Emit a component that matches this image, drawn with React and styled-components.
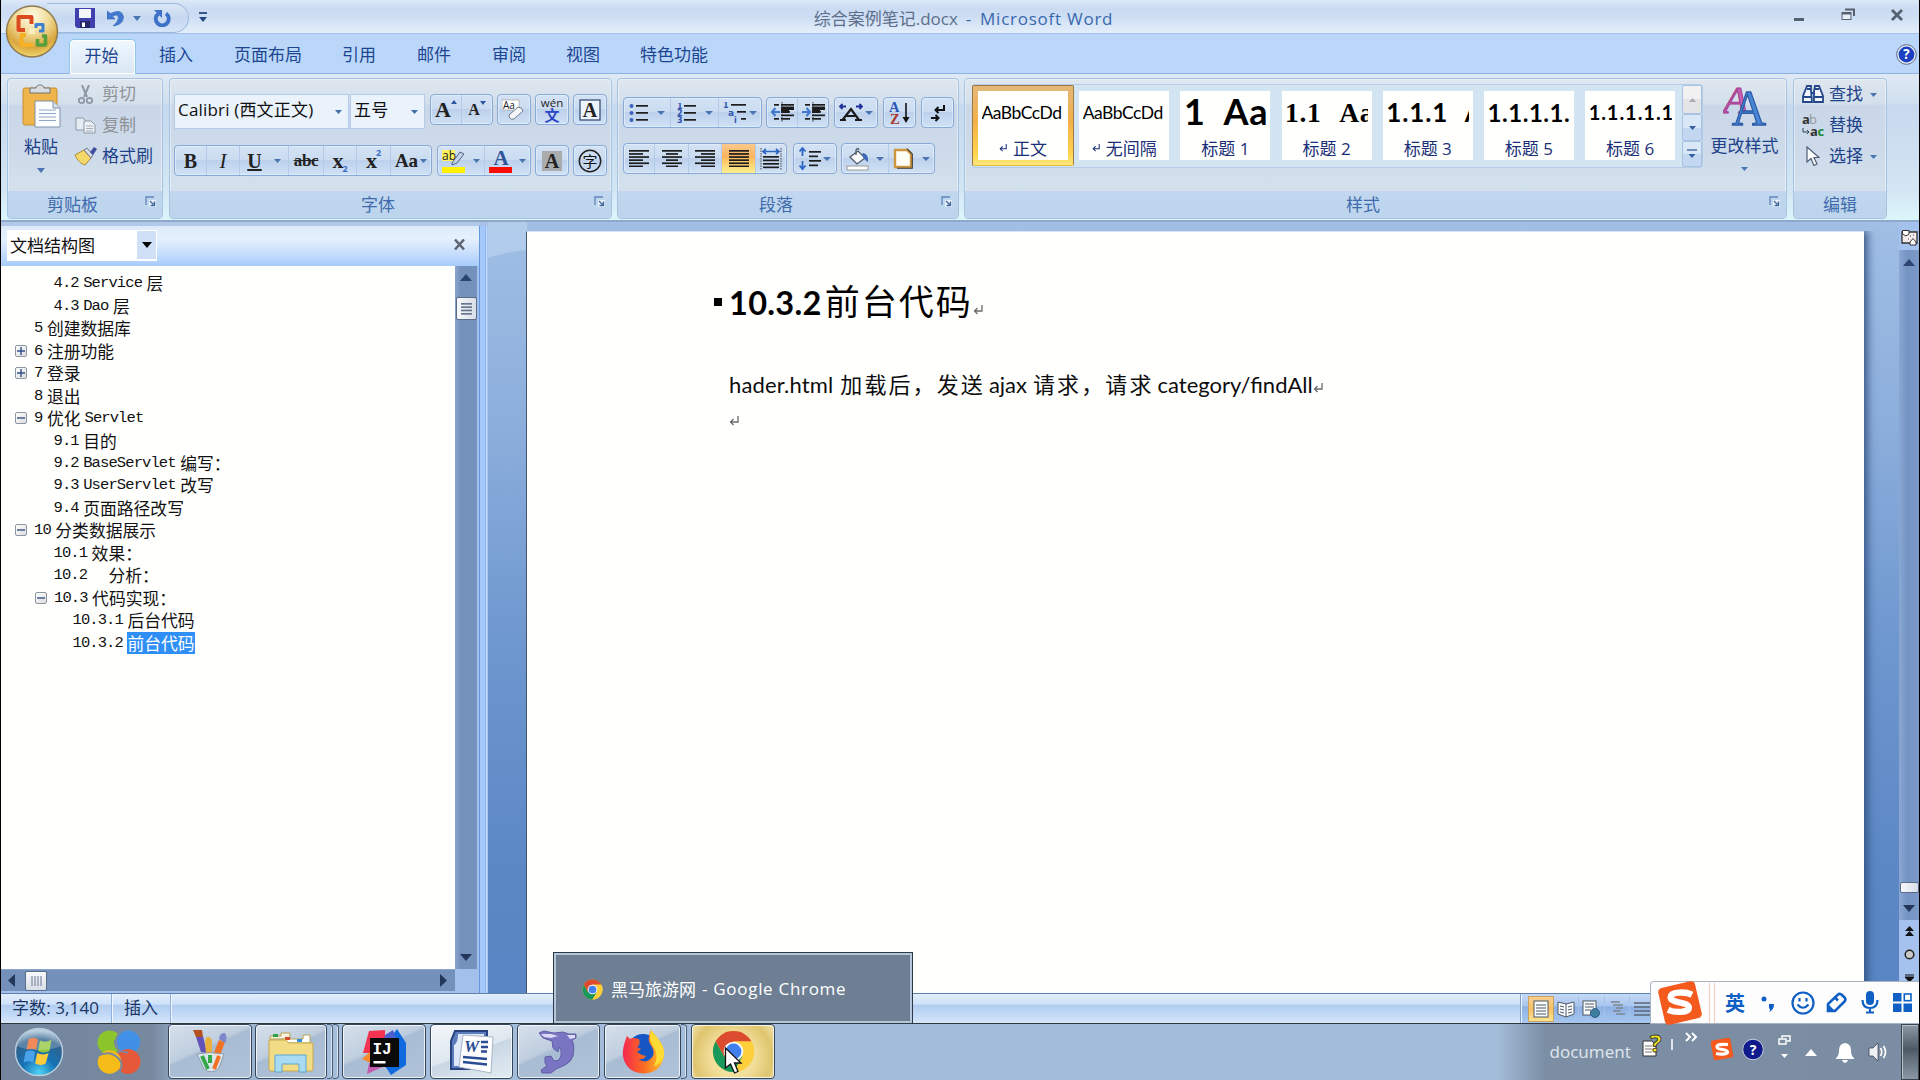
import React from 'react';
import styled, { createGlobalStyle, css } from 'styled-components';

const UI = '"Open Sans","Noto Sans CJK SC",sans-serif';
const CAL = 'Lato,"Noto Sans CJK SC",sans-serif';
const NAVY = '#1e4289';

const Global = createGlobalStyle`
  *{box-sizing:border-box;}
  body{margin:0;background:#000;overflow:hidden;}
`;

const Screen = styled.div`
  position:relative;width:1920px;height:1080px;overflow:hidden;background:#000;
  padding:0 1px;display:flex;flex-direction:column;font-family:${UI};font-size:17px;color:${NAVY};
  white-space:nowrap;cursor:default;
`;

/* title bar */
const TitleBar = styled.div`
  flex:none;height:34px;display:flex;align-items:flex-start;justify-content:space-between;
  background:linear-gradient(#dbe8f7 0,#cbdcf2 25%,#cddef4 50%,#dfebf9 90%,#e4effb 100%);
  border-bottom:1px solid #a5c3ea;
`;
const Quick = styled.div`
  width:340px;height:33px;padding:3px 0 0 46px;display:flex;align-items:flex-start;
`;
const QuickPill = styled.div`
  width:142px;height:30px;border:1px solid #9db9de;border-left:0;border-radius:0 16px 16px 0;
  background:linear-gradient(#dbe7f5,#c5d8f0 50%,#d6e5f7);display:flex;align-items:center;padding-left:28px;
`;
const Gap = styled.div`flex:none;width:${p => p.w || 0}px;height:${p => p.h || 0}px;`;
const Title = styled.div`
  width:310px;display:flex;justify-content:center;line-height:37px;font-size:17px;color:#3a68ad;gap:8px;margin-left:7px;
  b{font-weight:400;color:#5d6f8b;}
  span{letter-spacing:.75px;}
`;
const WinButtons = styled.div`width:340px;height:33px;display:flex;justify-content:flex-end;padding:8px 15px 0 0;`;

const OfficeButton = styled.div`
  position:absolute;left:5px;top:4px;width:54px;height:54px;
`;

/* tabs */
const TabStrip = styled.div`
  flex:none;height:40px;background:#bad7fa;border-bottom:1px solid #8fb3e0;display:flex;align-items:flex-end;padding-left:68px;
`;
const Tab = styled.div`
  height:34px;line-height:32px;width:${p => p.w}px;text-align:center;margin-right:${p => p.gap || 0}px;font-size:17px;color:#1d4690;
  ${p => p.$active && css`
    height:35px;margin-bottom:-1px;line-height:32px;padding-right:2px;border:1px solid #8ec7ea;border-bottom:0;border-radius:5px 5px 0 0;
    background:linear-gradient(#f2f8fe,#e3eefa 50%,#dbe7f3);box-shadow:inset 0 0 0 1px #fff;
  `}
`;
const HelpSlot = styled.div`flex:1;display:flex;justify-content:flex-end;padding:0 2px 8px 0;`;

/* ribbon */
const Ribbon = styled.div`
  flex:none;height:148px;padding:4px 0 0 6px;display:flex;align-items:flex-start;
  background:linear-gradient(#dfe9f4 0,#d0dfef 20%,#c6d9ee 21%,#d3e6f4 80%,#dcf6fb 100%);
  border-bottom:2px solid #8ea9cc;
`;
const Group = styled.div`
  flex:none;width:${p => p.w}px;height:141px;margin-right:${p => p.gap}px;border:1px solid #a6c3e2;border-radius:4px;
  box-shadow:inset 0 0 0 1px rgba(255,255,255,.4);
  background:linear-gradient(#dfe7ef 0,#d3dfeb 18%,#c9d7e8 19%,#ccdaea 50%,#d9e5ef 100%);
  display:flex;flex-direction:column;
`;
const GroupBody = styled.div`height:112px;display:flex;flex-direction:${p => (p.$col ? 'column' : 'row')};padding:${p => p.pad || 0};`;
const GroupLabel = styled.div`
  height:27px;background:linear-gradient(#c0d7ef,#bdd5ec);border-radius:0 0 3px 3px;display:flex;line-height:28px;
  color:#3f6bac;padding:0 6px 0 ${p => p.pl}px;justify-content:space-between;
  svg{margin-top:5px;}
`;
const Row = styled.div`display:flex;align-items:${p => p.align || 'flex-start'};gap:${p => p.gap || 0}px;height:${p => (p.h ? p.h + 'px' : 'auto')};`;
const Col = styled.div`display:flex;flex-direction:column;align-items:${p => p.align || 'flex-start'};width:${p => (p.w ? p.w + 'px' : 'auto')};padding:${p => p.pad || 0};`;
const Cmd = styled.div`
  display:flex;align-items:center;height:31px;color:${p => (p.off ? '#8f9296' : NAVY)};
  i{font-style:normal;width:${p => p.iw || 27}px;display:flex;justify-content:center;margin-right:${p => p.ig || 0}px;}
  span{line-height:24px;margin-top:-1px;}
`;
const BigLabel = styled.div`line-height:25px;height:24px;color:${NAVY};`;

const Combo = styled.div`
  flex:none;width:${p => p.w}px;height:35px;border:1px solid #b3cbe8;background:#eaf2fb;color:#101010;
  display:flex;align-items:center;justify-content:space-between;padding:0 6px 0 3px;font-size:17px;letter-spacing:.18px;
  span{line-height:26px;margin-top:-3px;}
`;
const Btns = styled.div`
  flex:none;display:flex;height:31px;border:1px solid #88aad6;border-radius:4px;margin-right:${p => p.mr || 0}px;
  background:linear-gradient(#d3e2f3 0,#cbdcf1 48%,#bdd1ec 50%,#cfe1f5 100%);box-shadow:inset 0 0 0 1px rgba(235,244,255,.6);
`;
const Cell = styled.div`
  flex:none;width:${p => p.w}px;height:29px;display:flex;align-items:center;justify-content:center;gap:${p => p.g || 0}px;
  border-right:${p => (p.last ? 0 : '1px solid #b3cbe8')};
  ${p => p.$on && css`background:linear-gradient(#fbc98c 0,#fbb35c 45%,#fdc261 52%,#fff08f 100%);`}
`;
const Glyph = styled.span`
  font-family:"Liberation Serif",serif;font-weight:${p => p.fw || 700};font-size:${p => p.s || 20}px;line-height:26px;color:${p => p.c || '#222'};
  font-style:${p => (p.it ? 'italic' : 'normal')};text-decoration:${p => p.td || 'none'};letter-spacing:${p => p.ls || 0}px;
`;
const Mini = styled.span`font-size:9px;font-weight:700;line-height:13px;color:#3b6fc9;align-self:${p => p.at};margin-left:-1px;`;

/* styles gallery */
const Gallery = styled.div`
  flex:none;width:731px;height:84px;border:1px solid #b5cce6;background:#d3e4f3;display:flex;border-radius:3px;
`;
const StyleCell = styled.div`
  flex:none;width:101.2px;height:82px;padding:${p => (p.$on ? '0' : '6px 5px 0')};
`;
const Pick = styled.div`
  width:102px;height:81px;margin-left:-1px;padding:5px;border:1px solid #9b7a45;border-bottom-color:#e5b93a;
  background:linear-gradient(#e5b878,#f3b04a 45%,#ffd24d 85%,#ffe77a);
  border-radius:2px;
`;
const Card = styled.div`
  width:90px;height:69px;background:#fffffd;overflow:hidden;display:flex;flex-direction:column;align-items:center;
`;
const Preview = styled.div`
  width:83px;height:45px;overflow:hidden;color:#000;font-family:${p => p.ff || CAL};font-weight:${p => p.fw || 400};
  font-size:${p => p.s}px;letter-spacing:${p => p.ls || 0}px;word-spacing:${p => p.ws || 0}px;line-height:${p => p.lh || 43}px;white-space:pre;
`;
const CardLabel = styled.div`line-height:23px;height:24px;color:#1a2f78;display:flex;align-items:center;gap:6px;font-size:17px;`;
const GalScroll = styled.div`width:20px;height:82px;margin-left:auto;display:flex;flex-direction:column;`;
const GalBtn = styled.div`
  height:${p => p.h}px;border:1px solid #a9c3e3;display:flex;align-items:center;justify-content:center;border-radius:2px;
  background:${p => (p.off ? 'linear-gradient(#f1f1f1 50%,#e2e4e6 50%)' : 'linear-gradient(#d9e7f7 50%,#c3d7f0 50%)')};
`;

/* work area */
const Work = styled.div`flex:none;height:771px;display:flex;background:#a9c3e8;`;
const Pane = styled.div`flex:none;width:478px;height:771px;padding-top:4px;background:linear-gradient(#b2c8e8 4px,#a3c0ec 4px);display:flex;flex-direction:column;`;
const PaneHead = styled.div`
  height:40px;background:linear-gradient(#dce9fa 0,#e6f1fe 30%,#d3e5fd 55%,#a8ccfb 100%);display:flex;align-items:flex-start;justify-content:space-between;padding:4px 13px 0 6px;
`;
const PaneCombo = styled.div`
  width:150px;height:31px;background:#fff;color:#111;display:flex;justify-content:space-between;padding:1px 1px 1px 3px;line-height:29px;
`;
const PaneClose = styled.div`padding-top:8px;`;
const ComboArrow = styled.div`width:19px;height:28px;background:#cfe0f7;display:flex;align-items:center;justify-content:center;`;
const TreeArea = styled.div`height:703px;display:flex;`;
const Tree = styled.div`width:454px;background:#fffffe;padding-top:6px;`;
const Node = styled.div`
  height:22.47px;display:flex;align-items:center;padding-left:${p => p.x}px;color:#111;
`;
const Toggle = styled.div`
  width:12px;height:12px;border:1px solid #8c97a3;border-radius:2px;background:linear-gradient(135deg,#fff,#dcdcdc);margin-right:7px;
  display:flex;align-items:center;justify-content:center;
`;
const Lat = styled.span`font-family:"Liberation Mono",monospace;font-size:15.5px;letter-spacing:-0.9px;margin-right:4.5px;line-height:22px;`;
const Han = styled.span`
  font-family:"Noto Sans CJK SC",sans-serif;font-size:16.8px;line-height:22px;margin-right:4px;
  ${p => p.$sel && css`background:#2f8ff5;color:#fff;`}
`;
const VScroll = styled.div`
  width:${p => p.w}px;height:100%;background:linear-gradient(90deg,#8aa5cd 0,#7391bb 25%,#7592bd 100%);display:flex;flex-direction:column;align-items:center;padding:${p => p.pad || 0};
`;
const Thumb = styled.div`
  width:${p => p.w}px;height:${p => p.h}px;border:1px solid #5c6c84;border-radius:2px;background:linear-gradient(${p => p.dir || '90deg'},#f7f9fc,#d8dee8);
  display:flex;align-items:center;justify-content:center;
`;
const HScroll = styled.div`
  width:454px;height:22px;background:#7391bb;border-top:1px solid #8aa5cd;display:flex;align-items:center;padding:0 7px;
`;
const Spacer = styled.div`flex:1;`;
const Splitter = styled.div`flex:none;width:9px;margin-top:4px;background:linear-gradient(90deg,#6497de 0 1px,#a5c9fa 1px 6px,#8db6f0 6px 7px,#c9defb 7px 8px,#a6c5ee 8px);`;
const Canvas = styled.div`
  flex:1;display:flex;height:771px;padding:9px 0 0 38px;position:relative;
  background:linear-gradient(#a1bfe5 0,#8dafdc 25%,#6e97cf 55%,#5b87c4 85%,#5a86c5 100%);
`;
const Wedge = styled.svg`position:absolute;left:0;top:0;`;
const Paper = styled.div`
  position:relative;width:1338px;height:762px;background:#fffffd;border-left:1px solid #44546e;border-top:1px solid #d7e4f5;
  box-shadow:2px 0 9px 1px #2f4d7c;clip-path:inset(0 -16px 0 0);padding:38px 0 0 187px;
`;
const Heading = styled.div`display:flex;align-items:baseline;height:93px;color:#000;font-family:${CAL};line-height:60px;`;
const HeadNum = styled.span`font-weight:700;font-size:32.5px;letter-spacing:0.3px;margin-right:3px;`;
const HeadHan = styled.span`font-family:"Noto Sans CJK SC",sans-serif;font-size:35px;letter-spacing:2px;`;
const Bullet = styled.span`width:8px;height:8px;background:#000;margin-right:7px;align-self:flex-start;margin-top:28px;`;
const Para = styled.div`display:flex;align-items:baseline;height:40px;line-height:40px;padding-left:15px;color:#0d0d0d;`;
const PLat = styled.span`font-family:${CAL};font-size:22px;letter-spacing:${p => p.ls || 0}px;margin-right:${p => p.mr}px;`;
const PHan = styled.span`font-family:"Noto Sans CJK SC",sans-serif;font-size:22px;letter-spacing:2.1px;margin-right:${p => p.mr}px;`;
const RightRail = styled.div`flex:none;width:20px;height:771px;display:flex;flex-direction:column;align-items:center;background:#a5c1ee;padding-top:7px;`;
const RailScroll = styled.div`width:20px;height:670px;margin-top:4px;background:linear-gradient(90deg,#8ba8d4,#7594c2 40%,#7b99c8);display:flex;flex-direction:column;align-items:center;padding:9px 0 8px;`;

/* status bar */
const Status = styled.div`
  flex:none;height:30px;display:flex;align-items:stretch;color:#1a3565;border-top:1px solid #5f7fae;
  background:linear-gradient(#e2eefc 0,#cfe1f8 35%,#b1cdf1 38%,#c4dbf7 75%,#d8e8fb 100%);
`;
const StatusItem = styled.div`
  width:${p => p.w}px;line-height:28px;padding-left:${p => p.pl}px;border-right:1px solid #8fb0dc;box-shadow:1px 0 0 #eff6ff;letter-spacing:${p => p.ls || 0}px;
`;
const Views = styled.div`margin-left:auto;width:399px;padding:2px 0 0 7px;display:flex;border-left:1px solid #7d9fd0;box-shadow:inset 1px 0 #eef5ff;background:linear-gradient(#c5daf5 0,#a9c6ee 40%,#8db1e3 45%,#a8c7f0 100%);`;
const ViewBtn = styled.div`
  width:25.5px;height:26px;display:flex;align-items:center;justify-content:center;border-right:1px solid #a5c2ea;
  ${p => p.$on && css`background:linear-gradient(#f6cf92,#f7bf62 50%,#ffe591);border:1px solid #c8a25e;`}
`;

/* task bar */
const Taskbar = styled.div`
  flex:none;height:57px;border-top:1px solid #30363e;display:flex;padding-left:13px;
  background:linear-gradient(90deg,#74869d 0,#77899f 150px,#8fa5c0 175px,#a4bdda 300px,#a4bdda 1495px,#7b8ea4 1545px,#7a8da3 100%);
`;
const Slot = styled.div`width:${p => p.w}px;height:56px;display:flex;align-items:center;justify-content:center;margin-right:${p => p.mr || 0}px;`;
const Task = styled.div`
  flex:none;width:${p => p.w}px;height:55px;margin-right:${p => p.mr || 0}px;border:1px solid #35455a;border-radius:4px;
  box-shadow:inset 0 0 0 1px rgba(255,255,255,.75);display:flex;align-items:center;justify-content:center;
  background:${p => p.bg || 'linear-gradient(155deg,#d6e0ec 0,#bfcede 42%,#a8bcd3 46%,#b0c3d9 100%)'};
`;
const StackEdge = styled.div`
  width:${p => p.w}px;height:55px;margin-right:${p => p.mr || 0}px;border:1px solid #4b5d75;border-left:0;border-radius:0 4px 4px 0;box-shadow:inset -1px 0 0 #dbe6f1;
`;
const Tray = styled.div`margin-left:auto;display:flex;align-items:center;height:56px;`;
const TrayText = styled.span`color:#dde3ea;font-size:17px;line-height:24px;margin-top:-1px;font-family:"Noto Sans",sans-serif;`;
const ShowDesk = styled.div`width:18px;height:56px;border:1px solid #39444f;box-shadow:inset 1px 1px 0 #b5c1cc;background:linear-gradient(#8d9aa6 0,#4d5a66 45%,#5f6d79 60%,#8a98a5 100%);`;

const HoverCard = styled.div`
  position:absolute;left:553px;top:952px;width:360px;height:72px;background:#6e7f93;border:1px solid #2c3947;
  box-shadow:inset 0 0 0 2px #b4c6d8;display:flex;align-items:center;padding:0 0 0 28px;color:#fff;
  svg{margin:2px 8px 0 0;}
  span{letter-spacing:.7px;margin-left:6px;}
`;
const Ime = styled.div`
  position:absolute;left:1650px;top:981px;width:269px;height:43px;background:#fdfdfd;border:1px solid #a9b4c2;border-right:0;border-radius:4px 0 0 0;
  display:flex;align-items:center;padding-left:7px;color:#0f5fc4;
`;
const ImeBar = styled.div`width:6px;height:40px;border:1px solid #f3cdbd;border-width:0 1px;margin:0 10px 0 7px;`;
const ImeZh = styled.b`font-size:20px;font-family:"Noto Sans CJK SC",sans-serif;line-height:40px;width:20px;`;
const Pointer = styled.svg`position:absolute;left:724px;top:1046px;`;

/* icons */
const Svg = ({ w, h, vb, children, ...r }) => (
  <svg width={w} height={h} viewBox={vb || `0 0 ${w} ${h}`} display="block" {...r}>{children}</svg>
);
const Down = ({ c = '#4a75b0', w = 7, h = 4 }) => <Svg w={w} h={h} vb="0 0 8 5" preserveAspectRatio="none"><path d="M0 0H8L4 5Z" fill={c} /></Svg>;
const Up = ({ c = '#2b4470', w = 12, h = 7 }) => <Svg w={w} h={h} vb="0 0 8 5" preserveAspectRatio="none"><path d="M0 5H8L4 0Z" fill={c} /></Svg>;
const Launcher = () => (
  <Svg w={11} h={11}><path d="M1 9V1H9" fill="none" stroke="#5f86bb" strokeWidth="1.3" /><path d="M4 4H11V11H4Z" fill="#e9f2fc" /><path d="M5 5L9 9M9.5 5.5V9.5H5.5" stroke="#47699b" strokeWidth="1.4" fill="none" /></Svg>
);
const Ret = ({ s = 10, c = '#6b6b6b' }) => (
  <Svg w={s} h={s} vb="0 0 10 10"><path d="M9 0V6H2M4.5 3L1.5 6L4.5 9" fill="none" stroke={c} strokeWidth="1.3" /></Svg>
);
const lines = (arr, c = '#1c1c1c') => arr.map(([x, y, w], i) => <rect key={i} x={x} y={y} width={w} height="1.7" fill={c} />);
const Chrome = ({ s }) => (
  <Svg w={s} h={s} vb="0 0 48 48">
    <circle cx="24" cy="24" r="23" fill="#fdd03b" />
    <path d="M4.1 12.5A23 23 0 0 0 24 47L34 30L24 24L14 30Z" fill="#18985a" />
    <path d="M24 47A23 23 0 0 0 43.900 12.500H24L34 30Z" fill="#fdd03b" />
    <path d="M4.100 12.500A23 23 0 0 1 43.900 12.500H24L14 30Z" fill="#dc4b2f" />
    <circle cx="24" cy="24" r="11" fill="#f5f5f5" /><circle cx="24" cy="24" r="8.8" fill="#3f80ee" />
  </Svg>
);
const Sogou = ({ s }) => (
  <Svg w={s} h={s} vb="0 0 42 42">
    <rect x="3" y="3" width="36" height="36" rx="4" fill="#f4591d" transform="rotate(-13 21 21)" />
    <path d="M32.500 13C26 10 12 10 12 15.500C12 21.500 29.500 19.500 29.500 25.500C29.500 30.500 16 30.500 9.500 27.500" fill="none" stroke="#fff" strokeWidth="6" />
  </Svg>
);
const Question = ({ s }) => (
  <Svg w={s} h={s} vb="0 0 22 22"><circle cx="11" cy="11" r="10.300" fill="#e6edf7" stroke="#53637e" /><circle cx="11" cy="11" r="8.300" fill="#1b3fc0" />
    <text x="11" y="16" fontSize="14" fontWeight="700" textAnchor="middle" fill="#fff" fontFamily="Open Sans">?</text></Svg>
);
const Orb = () => (
  <Svg w={54} h={54}>
    <defs><radialGradient id="orb" cx=".5" cy=".2" r=".85"><stop offset="0" stopColor="#fffbe6" /><stop offset=".4" stopColor="#f1da98" /><stop offset=".72" stopColor="#d9a63c" /><stop offset="1" stopColor="#f8e27d" /></radialGradient></defs>
    <circle cx="27" cy="27.500" r="25.500" fill="url(#orb)" stroke="#8f7b4e" strokeWidth="1.500" />
    <g fill="none" strokeWidth="4" strokeLinejoin="round">
      <path d="M20 26H13.500V13H26.500V20" stroke="#dc4a1f" /><path d="M31 24V20.500H38V27H34" stroke="#3c80cf" strokeWidth="3" />
      <path d="M28 41H16.500V31H21" stroke="#f6b024" /><path d="M32.500 35V41H40.500V32H37" stroke="#55a03c" strokeWidth="3.600" />
    </g>
    <path d="M24 25H30V30H24Z" fill="#fbefc0" />
  </Svg>
);
const listIcon = kind => (
  <Svg w={20} h={20}>
    {kind === 'ul' && [3, 10, 17].map(y => <circle key={y} cx="2.500" cy={y} r="2" fill="#3b62b8" />)}
    {kind === 'ol' && [1, 2, 3].map(n => <text key={n} x="0" y={7 * n - 1} fontSize="8" fontWeight="700" fill="#2f55b0" fontFamily="DejaVu Sans">{n}</text>)}
    {lines([[7, 2, 12], [7, 9, 12], [7, 16, 12]])}
  </Svg>
);
const align = rows => <Svg w={20} h={17}>{lines(rows.map(([x, w], i) => [x, i * 3.1, w]))}</Svg>;
const indent = left => (
  <Svg w={23} h={21}>{lines([[3, 2, 5], [10, 2, 13], [10, 5.500, 13], [10, 9, 9], [10, 12.500, 13], [3, 16, 5], [10, 16, 9]])}
    <path d="M10 4.500H23V8H10ZM10 8H18V11H10Z" fill="#1c1c1c" />
    <path d="M11 0V21" stroke="#333" strokeDasharray="1.500 1.500" />
    <path d={left ? 'M9 10H1M4.500 6L1 10L4.500 14' : 'M0 10H8M4.500 6L8 10L4.500 14'} stroke="#3f78cc" strokeWidth="2" fill="none" /></Svg>
);
const doc = (extra, w = 18, h = 18) => <Svg w={w} h={h} vb="0 0 18 18">{extra}</Svg>;

const segments = t => t.match(/[\x00-\xff]+|[^\x00-\xff]+/g).map((s, i) => (s.charCodeAt(0) < 256 ? <Lat key={i}>{s}</Lat> : <Han key={i}>{s}</Han>));
const TREE = [
  [52.5, '', '4.2', 'Service层'], [52.5, '', '4.3', 'Dao层'], [33, '', '5', '创建数据库'], [14, '+', '6', '注册功能'], [14, '+', '7', '登录'],
  [33, '', '8', '退出'], [14, '-', '9', '优化Servlet'], [52.5, '', '9.1', '目的'], [52.5, '', '9.2', 'BaseServlet编写：'], [52.5, '', '9.3', 'UserServlet改写'],
  [52.5, '', '9.4', '页面路径改写'], [14, '-', '10', '分类数据展示'], [52.5, '', '10.1', '效果：'], [52.5, '', '10.2', '　分析：'], [34, '-', '10.3', '代码实现：'],
  [71.5, '', '10.3.1', '后台代码'], [71.5, '', '10.3.2', '前台代码', true],
];
const TABS = [['插入', 34, 41], ['页面布局', 68, 40], ['引用', 34, 41], ['邮件', 34, 41], ['审阅', 34, 40], ['视图', 34, 39], ['特色功能', 70, 0]];
const STYLES = [
  { t: 'AaBbCcDd', s: 17.500, ls: -0.5, n: '正文', r: 1, on: 1 }, { t: 'AaBbCcDd', s: 17.500, ls: -0.5, n: '无间隔', r: 1 },
  { t: '1  Aa', s: 36, fw: 700, n: '标题 1', ls: 0.8, lh: 40 },
  { t: '1.1  Aa', s: 27.5, fw: 700, n: '标题 2', ff: '"Liberation Serif",serif', ls: 0.7, ws: 2 },
  { t: '1.1.1  A', s: 26, fw: 700, n: '标题 3', ls: 0.9, ws: 1.4 }, { t: '1.1.1.1.', s: 24, fw: 700, n: '标题 5', ls: 0.55 }, { t: '1.1.1.1.1', s: 20, fw: 700, n: '标题 6', ls: 0.95 },
];

const StyleCard = ({ d }) => (
  <Card>
    <Preview s={d.s} fw={d.fw} ls={d.ls} ws={d.ws} lh={d.lh} ff={d.ff}>{d.t}</Preview>
    <CardLabel>{d.r && <Ret s={8} c="#1a2f78" />}{d.n}</CardLabel>
  </Card>
);

function ClipboardGroup() {
  return (
    <Group w={156} gap={6}>
      <GroupBody>
        <Col w={66} pad="5px 0 0 0" align="center">
          <Svg w={40} h={44}>
            <rect x="2" y="4" width="34" height="37" rx="2" fill="#efb54a" stroke="#c98f35" />
            <path d="M9 9V4H15C15 0 23 0 23 4H29V9Z" fill="#d9dde2" stroke="#6e757d" />
            <path d="M14 17H32L39 24V43H14Z" fill="#fcfdff" stroke="#8090a8" /><path d="M32 17V24H39" fill="#d5deea" stroke="#8090a8" />
            {[26, 29.500, 33, 36.500].map(y => <path key={y} d={`M18 ${y}H35`} stroke="#8fa6c8" />)}
          </Svg>
          <Gap h={6} /><BigLabel>粘贴</BigLabel><Gap h={10} /><Down w={8} h={5} />
        </Col>
        <Col>
          <Cmd off iw={23} ig={5}><i><Svg w={15} h={20}><path d="M4 0L9 12M11 0L6 12" stroke="#8d97a5" strokeWidth="2" /><circle cx="3.500" cy="15.500" r="2.700" fill="none" stroke="#8d97a5" strokeWidth="1.800" /><circle cx="11.500" cy="15.500" r="2.700" fill="none" stroke="#8d97a5" strokeWidth="1.800" /></Svg></i><span>剪切</span></Cmd>
          <Cmd off iw={23} ig={5}><i><Svg w={21} h={17}><path d="M1 1H8L12 5V13H1Z" fill="#e6ecf3" stroke="#8d97a5" /><path d="M9 4H16L20 8V16H9Z" fill="#eef2f7" stroke="#8d97a5" /><path d="M11 9H18M11 11.500H18M11 14H18" stroke="#a4aebb" /></Svg></i><span>复制</span></Cmd>
          <Cmd iw={23} ig={5}><i><Svg w={23} h={19}><path d="M1 8L10 3L17 11L11 18C7 17 3 13 1 8Z" fill="#f4d86a" stroke="#a98a3e" /><path d="M10 3L13 1L19 8L17 11Z" fill="#d9dde6" stroke="#6f7788" /><path d="M16 5L20 0L23 2L19 8Z" fill="#3f50a0" /></Svg></i><span>格式刷</span></Cmd>
        </Col>
      </GroupBody>
      <GroupLabel pl={39}><span>剪贴板</span><Launcher /></GroupLabel>
    </Group>
  );
}

function FontGroup() {
  return (
    <Group w={443} gap={5}>
      <GroupBody $col pad="15px 0 0 4px">
        <Row h={51}>
          <Row gap={1}><Combo w={175}><span>Calibri (西文正文)</span><Down c="#3f6ea8" /></Combo><Combo w={75}><span>五号</span><Down c="#3f6ea8" /></Combo></Row>
          <Gap w={5} />
          <Btns mr={4}><Cell w={31}><Glyph s={22}>A</Glyph><Gap w={6} h={20}><Up c="#2b56a0" w={6} h={4} /></Gap></Cell><Cell w={30} last><Glyph s={16}>A</Glyph><Gap w={6} h={18}><Down c="#2b56a0" w={6} h={4} /></Gap></Cell></Btns>
          <Btns mr={4}><Cell w={32} last><Svg w={24} h={22}><rect x="0" y="1" width="17" height="10" fill="#fff" stroke="#999" strokeWidth=".6" /><text x="1" y="10" fontSize="10" fill="#222" fontFamily="Open Sans">Aa</text><path d="M7 16L16 8Q20 8 21 12L12 20Q7 21 7 16Z" fill="#f3f5f8" stroke="#707b8a" /></Svg></Cell></Btns>
          <Btns mr={4}><Cell w={32} last><Svg w={26} h={26}><text x="13" y="10" fontSize="11.500" textAnchor="middle" fill="#222" fontFamily="Open Sans">wén</text><text x="13" y="23.500" fontSize="15" textAnchor="middle" fill="#2c47c4" fontWeight="700" fontFamily="Noto Sans CJK SC">文</text></Svg></Cell></Btns>
          <Btns><Cell w={32} last><Svg w={22} h={22}><rect x="1" y="1" width="20" height="20" fill="#eef4fb" stroke="#3a5277" strokeWidth="1.300" /><text x="11" y="17.500" fontSize="20" fontWeight="700" textAnchor="middle" fill="#222" fontFamily="Liberation Serif">A</text></Svg></Cell></Btns>
        </Row>
        <Row>
          <Btns mr={5}>
            <Cell w={32}><Glyph>B</Glyph></Cell><Cell w={33}><Glyph it fw={400} s={21}>I</Glyph></Cell>
            <Cell w={49} g={12}><Glyph td="underline">U</Glyph><Down /></Cell>
            <Cell w={35}><Glyph td="line-through" s={17} ls={-0.3}>abc</Glyph></Cell>
            <Cell w={33}><Glyph s={22}>x</Glyph><Mini at="flex-end">2</Mini></Cell><Cell w={34}><Glyph s={22}>x</Glyph><Mini at="flex-start">2</Mini></Cell>
            <Cell w={40} g={2} last><Glyph s={19}>Aa</Glyph><Down /></Cell>
          </Btns>
          <Btns mr={4}>
            <Cell w={47} g={6}><Svg w={25} h={24}><rect x="0" y="1" width="13" height="11" fill="#fff25c" /><text x="0" y="11" fontSize="12" fill="#222" fontFamily="Open Sans">ab</text><path d="M10 14L18 3L22 5L15 14L10 16Z" fill="#c6d2e6" stroke="#4e6287" /><rect x="0" y="18" width="23" height="6" fill="#fff200" /></Svg><Down /></Cell>
            <Cell w={45} g={7} last><Svg w={23} h={24}><text x="12" y="15.500" fontSize="21" fontWeight="700" textAnchor="middle" fill="#2f559b" fontFamily="Liberation Serif">A</text><rect x="0" y="18" width="23" height="6" fill="#f80e02" /></Svg><Down /></Cell>
          </Btns>
          <Btns mr={4}><Cell w={32} last><Svg w={20} h={20}><rect width="20" height="20" fill="#a9abad" /><text x="10" y="17" fontSize="20" fontWeight="700" textAnchor="middle" fill="#222" fontFamily="Liberation Serif">A</text></Svg></Cell></Btns>
          <Btns><Cell w={32} last><Svg w={24} h={24}><circle cx="12" cy="12" r="10.700" fill="none" stroke="#222" strokeWidth="1.500" /><text x="12" y="17.500" fontSize="15" textAnchor="middle" fill="#111" fontFamily="Noto Sans CJK SC">字</text></Svg></Cell></Btns>
        </Row>
      </GroupBody>
      <GroupLabel pl={191}><span>字体</span><Launcher /></GroupLabel>
    </Group>
  );
}

function ParagraphGroup() {
  return (
    <Group w={342} gap={5}>
      <GroupBody $col pad="18px 0 0 5px">
        <Row h={46}>
          <Btns mr={4}><Cell w={47} g={8}>{listIcon('ul')}<Down w={8} /></Cell><Cell w={48} g={8}>{listIcon('ol')}<Down w={8} /></Cell>
            <Cell w={42} g={2} last><Svg w={24} h={21}>
              <text x="0" y="6" fontSize="8" fontWeight="700" fill="#2f55b0" fontFamily="DejaVu Sans">1</text><text x="5" y="14" fontSize="9" fontWeight="700" fill="#2f55b0" fontFamily="DejaVu Sans">a</text><text x="11" y="21" fontSize="8" fontWeight="700" fill="#2f55b0" fontFamily="DejaVu Sans">i</text>
              {lines([[8, 2, 15], [14, 9, 9], [18, 16, 5]])}</Svg><Down w={8} /></Cell></Btns>
          <Btns mr={5}><Cell w={31}>{indent(true)}</Cell><Cell w={30} last>{indent(false)}</Cell></Btns>
          <Btns mr={5}><Cell w={42} g={2} last><Svg w={24} h={19}><path d="M1 3.500H7M3.500 1L1 3.500L3.500 6M23 3.500H17M20.500 1L23 3.500L20.500 6" stroke="#1e2f9c" strokeWidth="1.800" fill="none" /><path d="M1 17H7M16 17H23M3.500 17L12 6L20 17M7 13H16" stroke="#1a1a1a" strokeWidth="2.200" fill="none" /></Svg><Down w={8} /></Cell></Btns>
          <Btns mr={5}><Cell w={31} last><Svg w={22} h={24}><text x="0" y="11" fontSize="14.500" fill="#2a56b5" fontWeight="700" fontFamily="Liberation Serif">A</text><text x="1" y="23" fontSize="14.500" fill="#a8382c" fontWeight="700" fontFamily="Liberation Serif">Z</text><path d="M17 2V20" stroke="#111" strokeWidth="1.600" /><path d="M13.500 16H20.500L17 22Z" fill="#111" /></Svg></Cell></Btns>
          <Btns><Cell w={31} last><Svg w={16} h={18}><path d="M14 1V6H6M8.500 3L5.500 6L8.500 9" stroke="#111" strokeWidth="2" fill="none" /><path d="M1 14H8M5.500 11L8.500 14L5.500 17" stroke="#111" strokeWidth="2" fill="none" /></Svg></Cell></Btns>
        </Row>
        <Row>
          <Btns mr={6}>
            <Cell w={31}>{align([[0, 20], [0, 14], [0, 20], [0, 14], [0, 20], [0, 14]])}</Cell>
            <Cell w={34}>{align([[0, 20], [4, 12], [0, 20], [4, 12], [0, 20], [4, 12]])}</Cell>
            <Cell w={33}>{align([[0, 20], [6, 14], [0, 20], [6, 14], [0, 20], [6, 14]])}</Cell>
            <Cell w={34} $on>{align([[0, 20], [0, 20], [0, 20], [0, 20], [0, 20], [0, 20]])}</Cell>
            <Cell w={30} last><Svg w={22} h={22}><path d="M1 0V22M21 0V22" stroke="#444" strokeDasharray="1.500 1" /><path d="M3 3.500H19M6 1L3 3.500L6 6M16 1L19 3.500L16 6" stroke="#2f66c4" strokeWidth="1.700" fill="none" />{lines([[3, 8, 16], [3, 11.500, 16], [3, 15, 16], [3, 18.500, 16]])}</Svg></Cell>
          </Btns>
          <Btns mr={4}><Cell w={42} g={2} last><Svg w={22} h={24}><path d="M3.500 1V9M.5 4.500L3.500 1L6.500 4.500M3.500 14V22M.5 18.500L3.500 22L6.500 18.500" stroke="#2f66c4" strokeWidth="1.800" fill="none" />{lines([[10, 4, 12], [10, 8.500, 9], [10, 13, 12], [10, 17.500, 9]])}</Svg><Down w={8} /></Cell></Btns>
          <Btns>
            <Cell w={47} g={6}><Svg w={24} h={24}><path d="M4 10L12 4L19 11L11 17Z" fill="#fafbfd" stroke="#4f5a6a" strokeWidth="1.300" /><path d="M10 8V3Q12 0 13 3" fill="none" stroke="#4f5a6a" strokeWidth="1.300" /><path d="M17 6Q23 7 22 15Q18 13 16 8Z" fill="#3d68b5" /><rect x="1" y="19" width="21" height="4" fill="#fff" stroke="#9a9a9a" /></Svg><Down w={8} /></Cell>
            <Cell w={45} g={9} last><Svg w={20} h={21}><path d="M2 2H14L18 6V19H2Z" fill="#fffef6" stroke="#cf9640" strokeWidth="2.400" /><path d="M14 .6L19.300 6V20.300H4" fill="none" stroke="#3a3a3a" strokeWidth="1.100" /></Svg><Down w={8} /></Cell>
          </Btns>
        </Row>
      </GroupBody>
      <GroupLabel pl={141}><span>段落</span><Launcher /></GroupLabel>
    </Group>
  );
}

function StylesGroup() {
  return (
    <Group w={823} gap={6}>
      <GroupBody pad="5px 0 0 7px">
        <Gallery>
          {STYLES.map((d, i) => <StyleCell key={i} $on={d.on}>{d.on ? <Pick><StyleCard d={d} /></Pick> : <StyleCard d={d} />}</StyleCell>)}
          <GalScroll><GalBtn h={29} off><Up c="#a9abb0" w={7} h={4} /></GalBtn><GalBtn h={27}><Down c="#345f9e" /></GalBtn><GalBtn h={26}><Svg w={10} h={10}><path d="M0 1H10" stroke="#4f74a8" strokeWidth="1.500" /><path d="M1.500 5H8.500L5 9Z" fill="#345f9e" /></Svg></GalBtn></GalScroll>
        </Gallery>
        <Col w={83} align="center" pad="2px 0 0 0">
          <Svg w={44} h={40}>
            <text x="0" y="27" fontSize="38" fontStyle="italic" fill="#c95fb4" stroke="#a23b8f" strokeWidth="1" fontFamily="Liberation Serif" textLength="25" lengthAdjust="spacingAndGlyphs">A</text>
            <text x="9" y="39" fontSize="51" fill="#4a86d8" stroke="#2c5ba6" strokeWidth="1.300" fontFamily="Liberation Serif" textLength="34" lengthAdjust="spacingAndGlyphs">A</text>
          </Svg>
          <Gap h={7} /><BigLabel>更改样式</BigLabel><Gap h={10} /><Down />
        </Col>
      </GroupBody>
      <GroupLabel pl={381}><span>样式</span><Launcher /></GroupLabel>
    </Group>
  );
}

function EditGroup() {
  return (
    <Group w={94} gap={0}>
      <GroupBody $col pad="0 0 0 7px">
        <Cmd iw={24} ig={4}><i><Svg w={22} h={19}><path d="M5 1H9V6L10 17H1V11ZM13 1H17L21 11V17H12V6Z" fill="#f2f6fb" stroke="#24468a" strokeWidth="1.800" /><path d="M9 8H13M1 12H10M12 12H21M5 4H9M13 4H17" stroke="#24468a" strokeWidth="2" /></Svg></i><span>查找</span><Gap w={7} /><Down /></Cmd>
        <Cmd iw={24} ig={4}><i><Svg w={24} h={24}><text x="1" y="10" fontSize="13" fontWeight="700" fill="#333" fontFamily="Open Sans">a</text><text x="8" y="10" fontSize="13" fill="#999" fontFamily="Open Sans">b</text><text x="9" y="22" fontSize="13" fontWeight="700" fill="#333" fontFamily="Open Sans">a</text><text x="16.500" y="22" fontSize="13" fontWeight="700" fill="#1d8a3a" fontFamily="Open Sans">c</text><path d="M2 14V18H8M6 16L8 18L6 20" stroke="#345" fill="none" /></Svg></i><span>替换</span></Cmd>
        <Cmd iw={24} ig={4}><i><Svg w={14} h={21}><path d="M1 1V16L5 12.500L8 19.500L11 18L8 11.500H13Z" fill="#fff" stroke="#4c5d76" strokeWidth="1.200" /></Svg></i><span>选择</span><Gap w={7} /><Down /></Cmd>
      </GroupBody>
      <GroupLabel pl={29}><span>编辑</span></GroupLabel>
    </Group>
  );
}

function DocMap() {
  return (
    <Pane>
      <PaneHead>
        <PaneCombo>文档结构图<ComboArrow><Down c="#000" w={10} h={6} /></ComboArrow></PaneCombo>
        <PaneClose><Svg w={13} h={13}><path d="M2 1.500L11 11.500M11 1.500L2 11.500" stroke="#5c6470" strokeWidth="2.600" /></Svg></PaneClose>
      </PaneHead>
      <TreeArea>
        <Tree>
          {TREE.map(([x, tg, num, label, sel]) => (
            <Node key={num} x={x}>
              {tg && <Toggle><Svg w={8} h={8}><path d={tg === '+' ? 'M0 4H8M4 0V8' : 'M0 4H8'} stroke="#33508a" strokeWidth="1.400" /></Svg></Toggle>}
              <Lat>{num}</Lat>{sel ? <Han $sel>{label}</Han> : segments(label)}
            </Node>
          ))}
        </Tree>
        <VScroll w={22} pad="8px 0 8px"><Up /><Gap h={16} /><Thumb w={21} h={23}><Svg w={11} h={12}>{lines([[0, 0, 11], [0, 3.300, 11], [0, 6.600, 11], [0, 10, 11]], '#68778d')}</Svg></Thumb><Spacer /><Down c="#24365a" w={12} h={7} /></VScroll>
      </TreeArea>
      <HScroll>
        <Svg w={7} h={13}><path d="M7 0V13L0 6.500Z" fill="#24365a" /></Svg><Gap w={10} />
        <Thumb w={22} h={20} dir="180deg"><Svg w={11} h={10}><path d="M1 0V10M4 0V10M7 0V10M10 0V10" stroke="#68778d" /></Svg></Thumb>
        <Spacer /><Svg w={7} h={13}><path d="M0 0V13L7 6.500Z" fill="#24365a" /></Svg><Gap w={1} />
      </HScroll>
    </Pane>
  );
}

function Document() {
  return (
    <Canvas>
      <Wedge width="39" height="36"><path d="M0 0H39V28Q18 30 0 36Z" fill="#b9d1f0" opacity=".7" /></Wedge>
      <Paper>
        <Heading><Bullet /><HeadNum>10.3.2</HeadNum><HeadHan>前台代码</HeadHan><Ret /></Heading>
        <Para><PLat mr={7} ls={0.15}>hader.html</PLat><PHan mr={4}>加载后，发送</PHan><PLat mr={6}>ajax</PLat><PHan mr={4}>请求，请求</PHan><PLat mr={0}>category/findAll</PLat><Ret /></Para>
        <Gap h={13} /><Row><Gap w={15} /><Ret /></Row>
      </Paper>
    </Canvas>
  );
}

const paperLines = <g stroke="#4d5866" fill="#fbfcfe"><rect x="2" y="1" width="14" height="16" /><path d="M4 5H14M4 8H14M4 11H14M4 14H14" /></g>;

export default function App() {
  return (
    <>
      <Global />
      <Screen>
        <TitleBar>
          <Quick>
            <QuickPill>
              <Svg w={20} h={20}><path d="M0 0H20V20H2L0 18Z" fill="#3f3fae" /><rect x="4" y="1" width="12" height="9" fill="#f3f5fb" /><rect x="5" y="13" width="10" height="7" fill="#26266b" /><rect x="7" y="14.500" width="3" height="4.500" fill="#fff" /></Svg>
              <Gap w={12} />
              <Svg w={18} h={18}><path d="M0 2V10H8L5.500 7.500Q11 4 11.500 9Q11 13 6 17Q16 16 16.500 8Q15 -1 3.500 4.500Z" fill="#4179cf" stroke="#2f62b5" strokeWidth=".6" /></Svg>
              <Gap w={8} /><Down w={8} h={5} /><Gap w={12} />
              <Svg w={18} h={18}><path d="M5.500 4.500A6.500 6.500 0 1 0 13 4.500" fill="none" stroke="#3d72c8" strokeWidth="3.800" /><path d="M1 1H9V9Z" fill="#3d72c8" /></Svg>
            </QuickPill>
            <Gap w={10} /><Col pad="9px 0 0 0"><Svg w={8} h={11}><path d="M0 1H8" stroke="#26477f" strokeWidth="1.800" /><path d="M0 5H8L4 10Z" fill="#26477f" /></Svg></Col>
          </Quick>
          <Title><b>综合案例笔记.docx</b><span>-</span><span>Microsoft Word</span></Title>
          <WinButtons>
            <Svg w={12} h={14}><rect x="1" y="10" width="10" height="3" fill="#56606e" /></Svg><Gap w={36} />
            <Svg w={14} h={14}><path d="M4 1.500H13V8" fill="none" stroke="#56606e" strokeWidth="2" /><rect x="1" y="4.500" width="9" height="7" fill="#e7eef7" stroke="#56606e" /><path d="M1 5.500H10" stroke="#56606e" strokeWidth="2" /></Svg><Gap w={35} />
            <Svg w={14} h={14}><path d="M2 2L12 12M12 2L2 12" stroke="#56606e" strokeWidth="2.800" /></Svg>
          </WinButtons>
        </TitleBar>
        <TabStrip>
          <Tab w={67} gap={23} $active>开始</Tab>
          {TABS.map(([t, w, g]) => <Tab key={t} w={w} gap={g}>{t}</Tab>)}
          <HelpSlot><Question s={21} /></HelpSlot>
        </TabStrip>
        <Ribbon><ClipboardGroup /><FontGroup /><ParagraphGroup /><StylesGroup /><EditGroup /></Ribbon>
        <Work>
          <DocMap /><Splitter /><Document />
          <RightRail>
            <Svg w={17} h={17}><path d="M1 3H16V14H1Z" fill="#f6ecec" stroke="#333" strokeWidth="1.300" /><path d="M1.500 1.500H8V5L5 7L1.500 5ZM9 13L12 9.500L15 13V16H9Z" fill="#fff" stroke="#333" /><path d="M9 7H10M12 6H13M7 10H8" stroke="#333" /></Svg>
            <RailScroll><Up /><Spacer /><Thumb w={19} h={11} /><Gap h={12} /><Down c="#24365a" w={12} h={7} /></RailScroll>
            <Gap h={6} /><Svg w={9} h={11}><path d="M0 5L4.500 0L9 5ZM0 10L4.500 5L9 10Z" fill="#111" /></Svg>
            <Gap h={12} /><Svg w={11} h={11}><circle cx="5.500" cy="5.500" r="4.300" fill="#c9c9c9" stroke="#222" strokeWidth="1.500" /></Svg>
            <Gap h={14} /><Svg w={9} h={11}><path d="M0 1H9M0 3L4.500 8L9 3Z" fill="#111" stroke="#111" strokeWidth="1" /></Svg>
          </RightRail>
        </Work>
        <Status>
          <StatusItem w={111} pl={11} ls={0.1}>字数: 3,140</StatusItem><StatusItem w={59} pl={12}>插入</StatusItem>
          <Views>
            <ViewBtn $on>{doc(paperLines)}</ViewBtn>
            <ViewBtn>{doc(<g stroke="#4d5866" fill="#fbfcfe"><path d="M1 2L9 4L17 2V14L9 17L1 14ZM9 4V17" /><path d="M3 6L7 7M3 9L7 10M3 12L7 13M11 7L15 6M11 10L15 9M11 13L15 12" /></g>)}</ViewBtn>
            <ViewBtn>{doc(<g stroke="#4d5866" fill="#fbfcfe"><rect x="1" y="1" width="13" height="14" /><path d="M3 4H12M3 7H12M3 10H9" /><circle cx="13" cy="13" r="4.500" fill="#3b7f9c" stroke="#335c8a" /></g>)}</ViewBtn>
            <ViewBtn>{doc(<path d="M3 2H12M5 5H15M8 8H15M5 11H13M8 14H17" stroke="#7d8590" strokeWidth="1.400" />)}</ViewBtn>
            <ViewBtn>{doc(<path d="M1 3H17M1 7H17M1 11H17M1 15H17" stroke="#5d6774" strokeWidth="1.600" />)}</ViewBtn>
          </Views>
        </Status>
        <Taskbar>
          <Slot w={50} mr={33}><Svg w={52} h={52}>
            <defs><radialGradient id="st" cx=".5" cy=".95" r=".9"><stop offset="0" stopColor="#4fd4f7" /><stop offset=".4" stopColor="#1673b5" /><stop offset=".8" stopColor="#2f5f8c" /><stop offset="1" stopColor="#a8c4d8" /></radialGradient></defs>
            <circle cx="26" cy="26" r="24.500" fill="url(#st)" stroke="#b9cfdd" strokeWidth="1.500" />
            <path d="M15 13Q20 10 25 13L23 24Q18 21 13 24Z" fill="#ee6a2c" /><path d="M27 14Q33 17 39 13L37 25Q31 28 25 25Z" fill="#93c83e" />
            <path d="M12 26Q17 23 22 26L20 37Q15 34 10 37Z" fill="#4aa3e8" /><path d="M24 27Q30 30 36 27L33 38Q28 41 22 38Z" fill="#fbcb3c" />
            <path d="M3 20Q10 3 26 2.500Q42 3 49 20Q26 28 3 20Z" fill="#fff" opacity=".22" />
          </Svg></Slot>
          <Slot w={44} mr={27}><Svg w={44} h={44}>
            <circle cx="12.500" cy="12.500" r="12" fill="#8cc42c" />
            <circle cx="31" cy="12" r="13" fill="#788aa0" /><circle cx="31.500" cy="12" r="11.500" fill="#3f90e6" />
            <circle cx="31" cy="31.500" r="12.500" fill="#e5583a" />
            <path d="M18 10Q17 22 31 22.500" stroke="#788aa0" strokeWidth="2" fill="none" />
            <circle cx="12.500" cy="32" r="11.800" fill="#f6bd18" />
            <path d="M0 26Q12 20 20 27Q28 33 22 43" stroke="#788aa0" strokeWidth="2" fill="none" />
            <path d="M1 25.500Q11 20.500 19.500 26Q22 22 20 19H8Z" fill="#8cc42c" opacity=".0" />
          </Svg></Slot>
          <Task w={84} mr={3}><Svg w={36} h={44}>
            <path d="M9 22L4 7L11 6L15 23Z" fill="#6252b8" /><path d="M1 0H10L11 7H4Z" fill="#b5511f" /><path d="M14 24L13 10Q16 3 20 10L20 24Z" fill="#e9b13b" /><path d="M21 25L27 10L33 12L27 28Z" fill="#f17222" /><path d="M27 9Q28 2 33 3Q36 8 33 13Z" fill="#7f86c9" />
            <path d="M5 24Q18 21 32 24L27 38Q20 45 12 39Z" fill="#e3edf1" opacity=".85" stroke="#8797a8" /><path d="M10 26L16 39M18 25V33" stroke="#35a84a" strokeWidth="4" /><path d="M27 26L22 39" stroke="#f17222" strokeWidth="4" />
          </Svg></Task>
          <Task w={72}><Svg w={46} h={42}>
            <path d="M2 5H13V2H22V8H2Z" fill="#f7f3df" stroke="#b9a24e" /><path d="M14 8H35V4H42V12H14Z" fill="#fff" stroke="#b9a24e" /><rect x="5" y="3" width="5" height="3" fill="#2aa644" /><rect x="17" y="6" width="5" height="3" fill="#d8482c" /><rect x="29" y="8" width="5" height="3" fill="#2f8ee0" />
            <path d="M1 9H18L21 12H45V38Q45 40 43 40H3Q1 40 1 38Z" fill="#f3dc86" stroke="#c5a74d" />
            <path d="M7 24H38V41H31V33H14V41H7Z" fill="#a9dcf2" stroke="#5aa6cf" />
          </Svg></Task>
          <StackEdge w={6} /><StackEdge w={6} mr={3} />
          <Task w={84} mr={4}><Svg w={46} h={46}>
            <path d="M8 2L24 1L24 24H2Z" fill="#f3334f" /><path d="M30 8L36 0L45 14V36L30 46L22 34Z" fill="#0f6ae0" /><path d="M1 30L10 22L14 36Z" fill="#f88a2a" /><path d="M8 34L6 45L26 36Z" fill="#c35bb0" /><path d="M24 6L32 1L36 12L22 14Z" fill="#4b5fd0" />
            <rect x="9" y="9" width="29" height="29" fill="#0a0a0a" /><text x="11.500" y="25" fontSize="16" fontWeight="700" fill="#fff" fontFamily="Liberation Mono">IJ</text><rect x="12.500" y="32" width="12" height="2.500" fill="#fff" />
          </Svg></Task>
          <Task w={83} mr={4} bg="linear-gradient(160deg,#f3f7fa 0,#dfe8f0 50%,#c9d7e4 52%,#e3ecf3 100%)"><Svg w={46} h={46}>
            <path d="M6 2H38V40H2V12Z" fill="#5c7dbb" stroke="#27427e" strokeWidth="2" /><path d="M9 5H35V37H5V16Q9 14 9 5Z" fill="#dfe8f6" />
            <path d="M14 6L44 8L42 44L10 38Z" fill="#fdfdff" stroke="#a9b4c6" /><text x="15" y="23" fontSize="17" fontStyle="italic" fontWeight="700" fill="#2a4c93" fontFamily="Liberation Serif">W</text>
            <path d="M32 13H39M32 18H39M32 22.500H38M14 28L38 30M14 33L38 35.500" stroke="#2a4c93" strokeWidth="2.600" />
          </Svg></Task>
          <Task w={83} mr={4}><Svg w={40} h={44}>
            <path d="M0 3L5 1L15 3L24 2L30 4L37 4L37 8L33 10Q36 16 34 26Q32 32 26 35L17 39L12 43H3L2 40L8 36L6 33V27L12 26L15 31L20 30Q23 26 22 20L20 17L19 22L14 18L13 11L4 8Z" fill="#7a75c2" stroke="#5a569f" strokeWidth=".9" />
            <path d="M2 4L12 4L19 6L12 8L5 7ZM28 5L36 5V8L31 9Z" fill="#dcdaf5" />
          </Svg></Task>
          <Task w={77}><Svg w={44} h={44}>
            <defs><linearGradient id="fx" x1="0" y1="0" x2="1" y2="0"><stop offset="0" stopColor="#f5274f" /><stop offset=".5" stopColor="#fb6a22" /><stop offset="1" stopColor="#fdc52c" /></linearGradient></defs>
            <circle cx="22" cy="20" r="16" fill="#1556c4" />
            <path d="M6 6Q8 8 9 9Q12 7 18 9Q20 14 16 17L20 19L16 22Q20 25 25 26Q22 30 17 29Q26 35 32 26Q34 20 29 14Q26 8 30 0Q35 6 38 10Q44 18 43 26Q40 43 23 43.500Q5 43 2 26Q1 18 6 6Z" fill="url(#fx)" />
            <path d="M30 0Q35 6 38 10Q44 18 43 26Q40 34 33 36Q38 26 33 18Q27 10 30 0Z" fill="#fddb35" />
          </Svg></Task>
          <StackEdge w={6} mr={4} />
          <Task w={84} bg="radial-gradient(circle at 50% 60%,#fbf0b8 0,#f0dc96 45%,#dfc56f 75%,#efe3ae 100%)"><Chrome s={43} /></Task>
          <Tray>
            <TrayText>document</TrayText><Gap w={11} />
            <Gap w={22} h={40}><Svg w={22} h={26}><path d="M1 9H10L14 13V24H1Z" fill="#fff" stroke="#333" /><path d="M3 14H10M3 17H10M3 20H10" stroke="#777" /><text x="8" y="20" fontSize="24" fontWeight="700" fill="#f5e91c" stroke="#333" strokeWidth=".9" fontFamily="Open Sans">?</text></Svg></Gap>
            <Gap w={7} /><Svg w={3} h={40}><rect width="2" height="11" y="7" fill="#dfe5ea" /></Svg><Gap w={11} />
            <Svg w={13} h={40}><path d="M1 1L5 5L1 9M7 1L11 5L7 9" stroke="#fff" strokeWidth="2" fill="none" /></Svg><Gap w={12} />
            <Svg w={24} h={30}><rect x="2" y="2" width="20" height="20" rx="2" fill="#f4591d" transform="rotate(-10 12 12)" /><path d="M18 7.500Q7 6.500 7 10C7 13.500 17.500 11.500 17.500 15C17.500 17.500 10 17.500 6 16.500" fill="none" stroke="#fff" strokeWidth="3.200" /></Svg><Gap w={8} />
            <Svg w={22} h={30}><circle cx="11" cy="12.500" r="10.300" fill="#0f1b8c" stroke="#c8cfdb" /><text x="11" y="17.500" fontSize="14" fontWeight="700" textAnchor="middle" fill="#fff" fontFamily="Open Sans">?</text></Svg><Gap w={14} />
            <Svg w={13} h={36}><path d="M4 4V2H12V7H9" fill="none" stroke="#fff" strokeWidth="1.500" /><rect x="1" y="5" width="7" height="5" fill="none" stroke="#fff" strokeWidth="1.500" /><path d="M3 20H10L6.500 24Z" fill="#fff" /></Svg><Gap w={14} />
            <Svg w={12} h={7}><path d="M0 7H12L6 0Z" fill="#fff" /></Svg><Gap w={18} />
            <Svg w={20} h={22}><path d="M1 17Q4 15 4 9Q4 3 10 2Q16 3 16 9Q16 15 19 17V18H1ZM7 19H13Q12 22 10 22Q8 22 7 19Z" fill="#fff" /></Svg><Gap w={13} />
            <Svg w={21} h={20}><path d="M1 6H5L10 1V19L5 14H1Z" fill="#eef1f4" stroke="#445" strokeWidth=".8" /><path d="M12.500 6Q15 10 12.500 14M15.500 4Q19.500 10 15.500 16" stroke="#fff" strokeWidth="1.700" fill="none" /></Svg>
            <Gap w={12} /><ShowDesk />
          </Tray>
        </Taskbar>

        <OfficeButton><Orb /></OfficeButton>
        <HoverCard><Chrome s={21} />黑马旅游网<span>- Google Chrome</span></HoverCard>
        <Ime>
          <Sogou s={44} /><ImeBar /><ImeZh>英</ImeZh><Gap w={16} />
          <Svg w={14} h={20}><circle cx="3" cy="6" r="2.500" fill="#0f5fc4" /><path d="M8 11H13Q13 17 8 19Q10 16 8 15Z" fill="#0f5fc4" /></Svg><Gap w={16} />
          <Svg w={24} h={24}><circle cx="12" cy="12" r="10.500" fill="none" stroke="#0f5fc4" strokeWidth="2.200" /><path d="M8.500 7V10.500M15.500 7V10.500M6.500 13.500Q12 20 17.500 13.500" stroke="#0f5fc4" strokeWidth="2.200" fill="none" /></Svg><Gap w={11} />
          <Svg w={21} h={21}><path d="M2 19V12L12 2.500Q14 1 16 3L19 6Q20 8 18.500 9.500L9 19ZM9 5.500L12 8.500" fill="none" stroke="#0f5fc4" strokeWidth="2.600" /><path d="M2 12L9 19H2Z" fill="#0f5fc4" /></Svg><Gap w={14} />
          <Svg w={18} h={23}><rect x="5" y="0" width="8" height="14" rx="4" fill="#0f5fc4" /><path d="M1.500 9Q1.500 17 9 17Q16.500 17 16.500 9M9 17V21.500M5 21.500H13" fill="none" stroke="#0f5fc4" strokeWidth="2.200" /></Svg><Gap w={14} />
          <Svg w={19} h={19}><rect width="8.500" height="8.500" fill="#0f5fc4" /><rect x="11.300" y="1" width="6.700" height="6.700" fill="none" stroke="#0f5fc4" strokeWidth="1.600" /><rect y="10.500" width="8.500" height="8.500" fill="#0f5fc4" /><rect x="10.500" y="10.500" width="8.500" height="8.500" fill="#0f5fc4" /></Svg>
        </Ime>
        <Pointer width="20" height="30"><path d="M1.500 2V22L6.500 18L10.500 27L14 25.500L10.500 17H17Z" fill="#fff" stroke="#111" strokeWidth="1.300" /></Pointer>
      </Screen>
    </>
  );
}
